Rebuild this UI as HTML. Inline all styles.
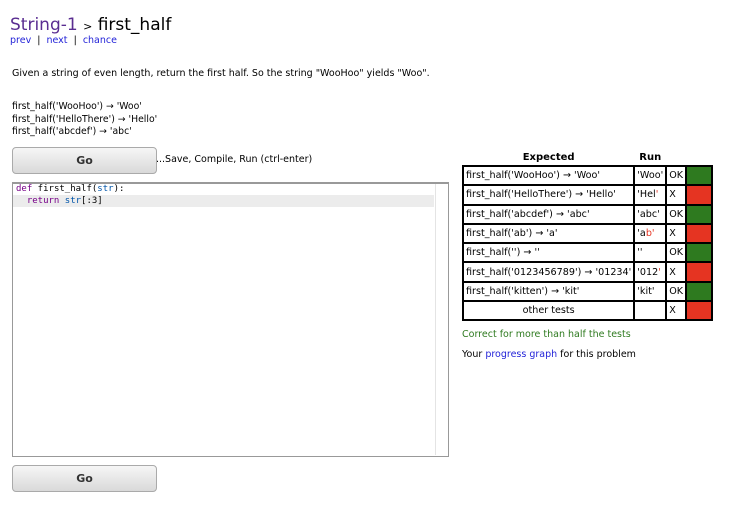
<!DOCTYPE html>
<html><head><style>
body{margin:0;width:732px;height:508px;background:#fff;font-family:"DejaVu Sans",Verdana,sans-serif;font-size:9.5px;color:#000;position:relative;overflow:hidden}
.a{position:absolute;white-space:nowrap}
a{color:#2323d8;text-decoration:none}
.btn{position:absolute;left:12px;width:143px;height:25px;border:1px solid #aaa;border-radius:4px;background:linear-gradient(#f6f6f6,#d9d9d9);font-weight:bold;font-size:11px;text-align:center;line-height:25px;color:#333}
table{position:absolute;left:462px;top:151px;border-collapse:collapse;font-size:9.6px}
td{border:2px solid #000;height:17.3px;padding:0 2px;white-space:nowrap}
th{border:none;font-size:10px;padding:0 0 1px;height:13px}
.g{background:#2e7a1f;width:20px}.r{background:#e53422;width:20px}
.red{color:#e53422}
</style></head><body>
<div class="a" style="left:10px;top:15px;font-size:17px"><span style="color:#5a2d91">String-1</span> <span style="font-size:11px">&gt;</span> first_half</div>
<div class="a" style="left:10px;top:35px;font-size:9.5px"><a>prev</a> &nbsp;| &nbsp;<a>next</a> &nbsp;| &nbsp;<a>chance</a></div>
<div class="a" style="left:12px;top:68px">Given a string of even length, return the first half. So the string "WooHoo" yields "Woo".</div>
<div class="a" style="left:12px;top:101px;line-height:12.5px;font-size:9.3px">first_half('WooHoo') → 'Woo'<br>first_half('HelloThere') → 'Hello'<br>first_half('abcdef') → 'abc'</div>
<div class="btn" style="top:147px">Go</div>
<div class="a" style="left:156px;top:154px">...Save, Compile, Run (ctrl-enter)</div>
<div class="a" style="left:12px;top:182px;width:435px;height:272px;border:1px solid #999;border-top:2px solid #999"></div>
<div class="a" style="left:435px;top:184px;width:1px;height:271px;background:#e4e4e4"></div>
<div class="a" style="left:13px;top:195px;width:421px;height:12px;background:#ececec"></div>
<div class="a" style="left:16px;top:183px;font-family:'DejaVu Sans Mono',monospace;font-size:9px;line-height:12px"><span style="color:#708">def</span> first_half(<span style="color:#05a">str</span>):<br>&nbsp;&nbsp;<span style="color:#708">return</span> <span style="color:#05a">str</span>[:3]</div>
<div class="btn" style="top:465px">Go</div>
<table>
<tr><th>Expected</th><th>Run</th><th></th><th></th></tr>
<tr><td>first_half('WooHoo') → 'Woo'</td><td>'Woo'</td><td>OK</td><td class="g"></td></tr>
<tr><td>first_half('HelloThere') → 'Hello'</td><td>'Hel<span class="red">'</span></td><td>X</td><td class="r"></td></tr>
<tr><td>first_half('abcdef') → 'abc'</td><td>'abc'</td><td>OK</td><td class="g"></td></tr>
<tr><td>first_half('ab') → 'a'</td><td>'a<span class="red">b'</span></td><td>X</td><td class="r"></td></tr>
<tr><td>first_half('') → ''</td><td>''</td><td>OK</td><td class="g"></td></tr>
<tr><td>first_half('0123456789') → '01234'</td><td>'012<span class="red">'</span></td><td>X</td><td class="r"></td></tr>
<tr><td>first_half('kitten') → 'kit'</td><td>'kit'</td><td>OK</td><td class="g"></td></tr>
<tr><td style="text-align:center">other tests</td><td></td><td>X</td><td class="r"></td></tr>
</table>
<div class="a" style="left:462px;top:329px;color:#2e7a1f">Correct for more than half the tests</div>
<div class="a" style="left:462px;top:349px">Your <a>progress graph</a> for this problem</div>
</body></html>
